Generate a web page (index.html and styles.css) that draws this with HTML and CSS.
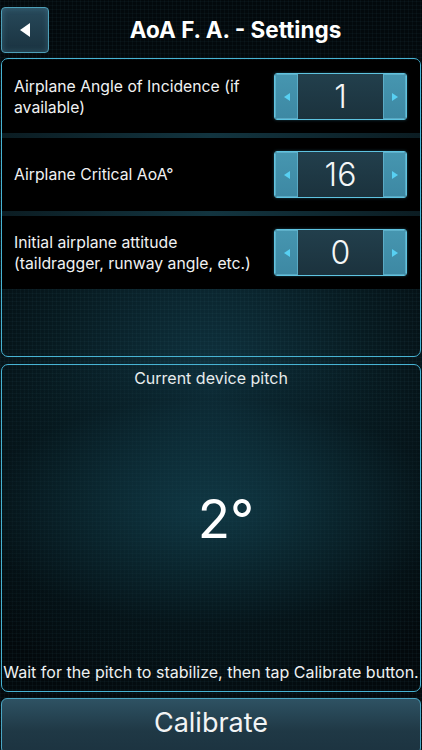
FILE: index.html
```html
<!DOCTYPE html>
<html lang="en">
<head>
<meta charset="utf-8">
<title>AoA F. A. - Settings</title>
<link rel="stylesheet" href="styles.css">
</head>
<body>
<div class="screen">
  <header class="topbar">
    <button class="back" aria-label="Back">
      <svg width="12" height="16" viewBox="0 0 12 16"><path d="M11 1 L1 8 L11 15 Z" fill="#ffffff"/></svg>
    </button>
    <h1 class="title">AoA F. A. - Settings</h1>
  </header>

  <section class="panel settings">
    <div class="row">
      <div class="row-label">Airplane Angle of Incidence (if<br>available)</div>
      <div class="stepper">
        <span class="step-btn"><svg width="6" height="8" viewBox="0 0 6 8"><path d="M6 0 L0 4 L6 8 Z" fill="#58d0f2"/></svg></span>
        <span class="step-value">1</span>
        <span class="step-btn"><svg width="6" height="8" viewBox="0 0 6 8"><path d="M0 0 L6 4 L0 8 Z" fill="#58d0f2"/></svg></span>
      </div>
    </div>
    <div class="sep"></div>
    <div class="row">
      <div class="row-label">Airplane Critical AoA°</div>
      <div class="stepper">
        <span class="step-btn"><svg width="6" height="8" viewBox="0 0 6 8"><path d="M6 0 L0 4 L6 8 Z" fill="#58d0f2"/></svg></span>
        <span class="step-value">16</span>
        <span class="step-btn"><svg width="6" height="8" viewBox="0 0 6 8"><path d="M0 0 L6 4 L0 8 Z" fill="#58d0f2"/></svg></span>
      </div>
    </div>
    <div class="sep"></div>
    <div class="row">
      <div class="row-label">Initial airplane attitude<br>(taildragger, runway angle, etc.)</div>
      <div class="stepper">
        <span class="step-btn"><svg width="6" height="8" viewBox="0 0 6 8"><path d="M6 0 L0 4 L6 8 Z" fill="#58d0f2"/></svg></span>
        <span class="step-value">0</span>
        <span class="step-btn"><svg width="6" height="8" viewBox="0 0 6 8"><path d="M0 0 L6 4 L0 8 Z" fill="#58d0f2"/></svg></span>
      </div>
    </div>
  </section>

  <section class="panel pitch">
    <div class="pitch-caption">Current device pitch</div>
    <div class="pitch-value">2°</div>
    <div class="pitch-hint">Wait for the pitch to stabilize, then tap Calibrate button.</div>
  </section>

  <button class="calibrate">Calibrate</button>
</div>
</body>
</html>
```
FILE: styles.css
```css
* { box-sizing: border-box; }
html, body { margin: 0; padding: 0; }
body {
  width: 422px;
  height: 750px;
  overflow: hidden;
  font-family: Inter, "Liberation Sans", sans-serif;
  color: #f2f4f5;
  background-color: #03080a;
  background-image:
    repeating-linear-gradient(0deg, rgba(60,110,125,0.07) 0 1px, transparent 1px 4px),
    repeating-linear-gradient(90deg, rgba(60,110,125,0.07) 0 1px, transparent 1px 4px),
    radial-gradient(ellipse 70% 45% at 50% 52%, #0f3340 0%, #071a20 55%, #03090c 100%);
}
.screen {
  display: flex;
  flex-direction: column;
  height: 750px;
}
.screen > * { flex-shrink: 0; }
.topbar {
  display: flex;
  align-items: center;
  height: 58px;
  padding: 0 0 0 1px;
}
.back {
  width: 48px;
  height: 46px;
  margin-top: 1px;
  border: 1.5px solid #4e9fb8;
  border-radius: 4px;
  background: linear-gradient(#27495a, #1a3340);
  box-shadow: inset 0 0 6px rgba(120,200,230,0.25);
  display: flex;
  align-items: center;
  justify-content: center;
  padding: 0;
}
.title {
  flex: 1;
  margin: 0;
  text-align: center;
  font-size: 22.5px;
  font-weight: 700;
  color: #ffffff;
}
.panel {
  margin: 0 1px;
  border: 1.5px solid #47b3d3;
  border-radius: 7px;
}
.settings {
  height: 299px;
  padding-top: 0.5px;
  overflow: hidden;
}
.row {
  height: 73px;
  background: #000;
  display: flex;
  align-items: center;
  justify-content: space-between;
  padding: 1px 13px 0 12px;
}
.row-label {
  font-size: 15.75px;
  line-height: 21px;
  color: #f0f2f3;
}
.sep {
  height: 5px;
  background: linear-gradient(90deg, #0b1c22, #12343f 50%, #0b1c22);
}
.stepper {
  width: 133px;
  height: 47px;
  border: 1.5px solid #5ec3e0;
  border-radius: 3px;
  display: flex;
  overflow: hidden;
  box-shadow: 0 0 3px rgba(80,190,225,0.35);
  flex-shrink: 0;
}
.step-btn {
  width: 23px;
  background: linear-gradient(#4696b0, #3d88a3);
  display: flex;
  align-items: center;
  justify-content: center;
  box-shadow: inset 0 0 0 1px rgba(130,215,240,0.4);
}
.step-value {
  flex: 1;
  background: linear-gradient(#223f4c, #1b323d);
  display: flex;
  align-items: center;
  justify-content: center;
  font-size: 32px;
  font-weight: 300;
  color: #f4f6f7;
}
.pitch {
  margin-top: 7px;
  height: 328px;
  display: flex;
  flex-direction: column;
  align-items: center;
  background: radial-gradient(ellipse 80% 50% at 50% 45%, rgba(20,70,85,0.55), rgba(5,20,25,0.3) 70%, transparent);
}
.pitch-caption {
  margin-top: 3px;
  font-size: 16px;
  color: #e8eced;
}
.pitch-value {
  margin-top: 101px;
  padding-left: 30px;
  font-size: 53px;
  line-height: 60px;
  font-weight: 400;
  color: #ffffff;
}
.pitch-hint {
  margin-top: auto;
  margin-bottom: 9px;
  font-size: 16px;
  color: #eef1f2;
  white-space: nowrap;
}
.calibrate {
  margin: 6px 1px 0;
  height: 56px;
  border: 1.5px solid #4aa6c4;
  border-radius: 6px;
  background: linear-gradient(#2e5263, #1f3845 60%, #1c3340);
  color: #f2f4f5;
  font-family: Inter, "Liberation Sans", sans-serif;
  font-size: 27px;
  padding: 0 0 8px;
}
```
